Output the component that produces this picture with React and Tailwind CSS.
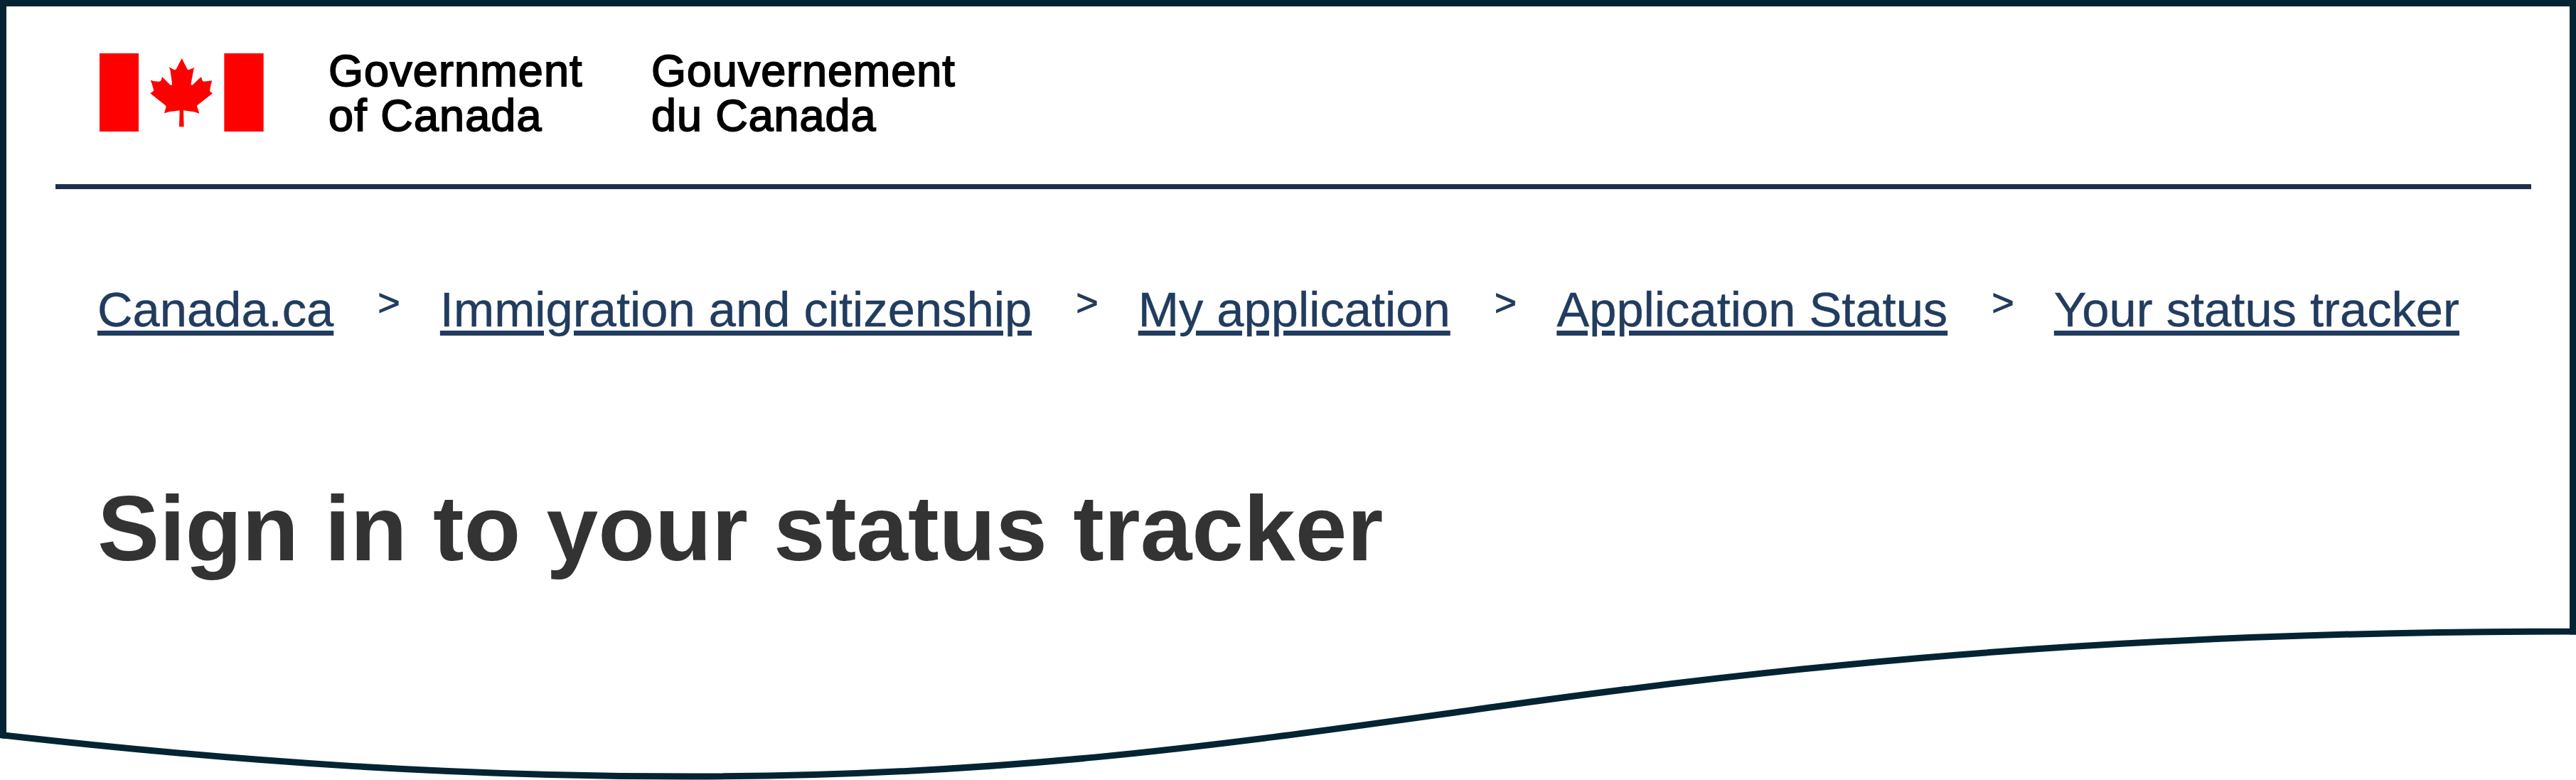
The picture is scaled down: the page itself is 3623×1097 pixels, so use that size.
const links = [
  "Canada.ca",
  "Immigration and citizenship",
  "My application",
  "Application Status",
  "Your status tracker",
];

function Flag() {
  return (
    <svg className="h-[110px] w-[231px] shrink-0" viewBox="0 0 693 330" preserveAspectRatio="none" fill="#ff0000" aria-hidden="true">
      <rect x="0" y="0" width="165" height="330" />
      <rect x="526" y="0" width="166" height="330" />
      <path d="M347 21 L370 66 Q373 71 378 69 L400 60 Q396 66 396 74 L386 127 Q385 139 394 132 L425 102 Q431 98 431 106 Q432 117 440 119 L475 115 Q470 128 467 148 Q464 158 467 162 L477 169 L413 219 Q409 223 414 232 L421 254 Q400 245 376 244 L354 241 L356 310 L336 310 L338 241 L316 244 Q292 245 273 253 L280 229 Q282 223 277 219 L214 169 L227 160 Q230 156 226 146 Q222 128 215 113 Q230 119 248 119 Q260 119 261 110 L264 99 L297 132 Q307 139 306 127 L299 74 Q297 62 291 57 L314 69 Q321 72 325 64 Z" />
    </svg>
  );
}

export default function App() {
  return (
    <div className="relative h-[1097px] w-[3623px] overflow-hidden bg-white font-['Liberation_Sans',Arial,sans-serif]">
      <svg className="absolute inset-0 h-full w-full" viewBox="0 0 3623 1097" fill="none" aria-hidden="true">
        <path d="M4.5 1034 V4.5 H3618.5 V888 C2950 888 2480 941 2101.5 994.3 C1750 1043 1430 1092 973 1092 C640 1092 330 1071 4.5 1034 Z" stroke="#042333" strokeWidth="9" />
        <path d="M0 1033.5 L9 1034.5 M3614 888 H3623" stroke="#042333" strokeWidth="9" />
      </svg>
      <div className="relative flex flex-col pt-[75px]">
        <header className="mx-[78px] flex h-[191px] w-[3482px] items-start border-b-[7px] border-[#1f3048] pl-[62px] text-[63px] leading-[63px] tracking-[1.1px] text-black">
          <Flag />
          <p className="-mt-[7px] ml-[91px] w-[454px] whitespace-nowrap [-webkit-text-stroke:1.8px_black]">
            Government
            <br />
            of Canada
          </p>
          <p className="-mt-[7px] whitespace-nowrap tracking-[0.9px] [-webkit-text-stroke:1.8px_black]">
            Gouvernement
            <br />
            du Canada
          </p>
        </header>
        <nav className="mt-[130px] flex h-[80px] items-start whitespace-nowrap pl-[137px] text-[68.7px] leading-[80px] text-[#213c5e]">
          {links.map((label, i) => (
            <div key={label} className="flex">
              {i > 0 && (
                <span className="-mt-[11px] w-[149.6px] pl-[62px] text-[54px] [-webkit-text-stroke:0.8px_#213c5e]">&gt;</span>
              )}
              <a href="#" className="underline decoration-[7px] underline-offset-[6px] [-webkit-text-stroke:0.4px_#213c5e]">
                {label}
              </a>
            </div>
          ))}
        </nav>
        <h1 className="mt-[192px] whitespace-nowrap pl-[137px] text-[130.7px] font-bold leading-[150px] text-[#333333]">
          Sign in to your status tracker
        </h1>
      </div>
    </div>
  );
}
